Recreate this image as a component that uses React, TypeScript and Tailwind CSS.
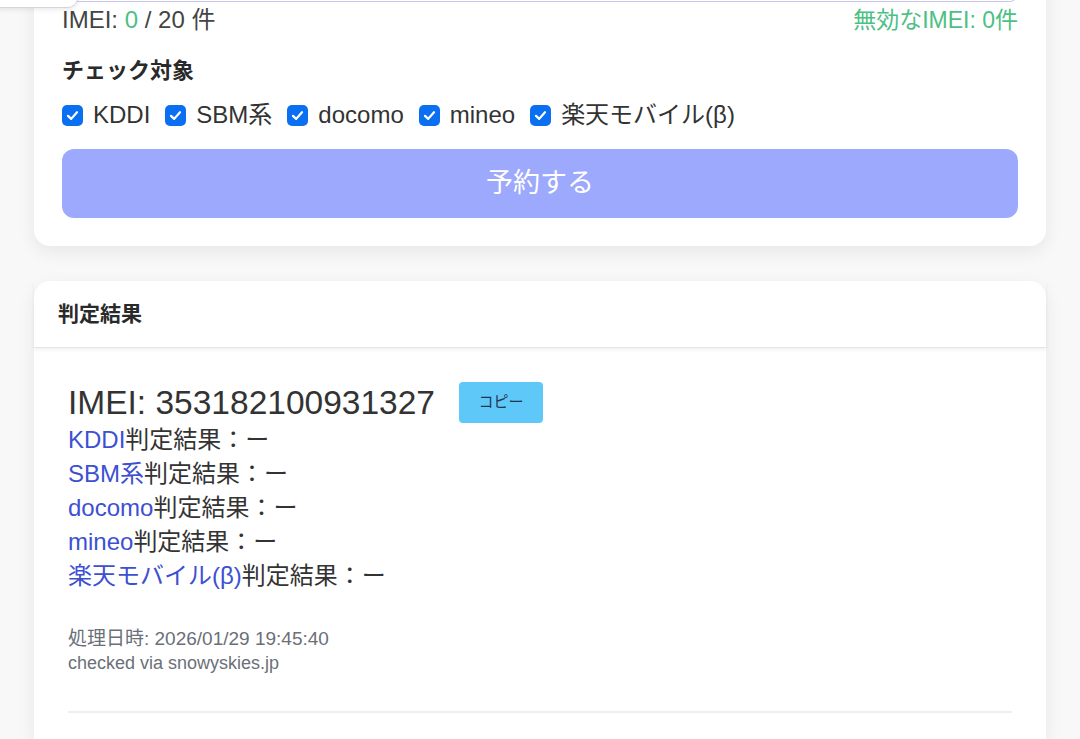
import React from 'react';

const carriers = ['KDDI', 'SBM系', 'docomo', 'mineo', '楽天モバイル(β)'];

const font = { fontFamily: '"Liberation Sans", "Noto Sans CJK JP", sans-serif' };

function CheckBox() {
  return (
    <span className="inline-flex items-center justify-center w-[21px] h-[21px] rounded-[5px] bg-[#0a6ff0]">
      <svg viewBox="0 0 16 16" className="w-[15px] h-[15px]" fill="none">
        <path d="M3.2 8.4 L6.6 11.6 L12.8 4.6" stroke="white" strokeWidth="2.4" strokeLinecap="round" strokeLinejoin="round" />
      </svg>
    </span>
  );
}

export default function App() {
  return (
    <div className="relative min-h-screen bg-[#f8f8f9] overflow-hidden text-[#333]" style={font}>
      {/* floating element cut off at top-left */}
      <div className="absolute top-[-20px] left-[-10px] w-[88px] h-[28px] rounded-b-[10px] bg-white border border-[#d6d6da] shadow-[0_2px_4px_rgba(0,0,0,0.08)] z-10" />

      <div className="px-[34px]">
        {/* entry card */}
        <div className="mt-[-150px] bg-white rounded-[16px] shadow-[0_6px_18px_rgba(0,0,0,0.07)] px-[28px] pt-[28px] pb-[28px]">
          <div className="h-[124px] rounded-[8px] border border-[#c9c6ea]" />
          <div className="mt-[6px] h-[24px] flex items-center justify-between text-[24px] leading-[24px]">
            <div className="text-[#444]">
              IMEI: <span className="text-[#4cc083]">0</span> / 20 件
            </div>
            <div className="text-[#4cc083] text-[23px]">無効なIMEI: 0件</div>
          </div>
          <div className="mt-[24px] h-[28px] flex items-center text-[22px] font-semibold text-[#2a2a2a]">チェック対象</div>
          <div className="mt-[17px] h-[28px] flex items-center gap-[15px] text-[24px] text-[#333]">
            {carriers.map((c) => (
              <label key={c} className="flex items-center gap-[10px]">
                <CheckBox />
                <span>{c}</span>
              </label>
            ))}
          </div>
          <button
            type="button"
            className="mt-[20px] w-full h-[69px] rounded-[12px] bg-[#9da9fc] text-white text-[27px] flex items-center justify-center"
          >
            予約する
          </button>
        </div>

        {/* result card */}
        <div className="mt-[35px] bg-white rounded-t-[16px] shadow-[0_6px_18px_rgba(0,0,0,0.07)] min-h-[460px]">
          <div className="relative h-[67px] px-[24px] flex items-center text-[21px] font-semibold text-[#2a2a2a] border-b border-[#e6e6e6] shadow-[0_2px_4px_rgba(0,0,0,0.06)]">
            判定結果
          </div>
          <div className="px-[34px] pt-[34px]">
            <div className="flex items-center gap-[24px] h-[41px]">
              <div className="text-[33.5px] text-[#333] leading-[41px]">IMEI: 353182100931327</div>
              <button
                type="button"
                className="w-[84px] h-[41px] rounded-[4px] bg-[#5ec9f8] text-[#1f3550] text-[15px] flex items-center justify-center"
              >
                コピー
              </button>
            </div>
            <div className="text-[24px] leading-[34px]">
              {carriers.map((c) => (
                <div key={c}>
                  <span className="text-[#3d50d2]">{c}</span>
                  <span className="text-[#333]">判定結果：ー</span>
                </div>
              ))}
            </div>
            <div className="mt-[33px] leading-[25px] text-[#6b6f78]">
              <div className="text-[19px]">処理日時: 2026/01/29 19:45:40</div>
              <div className="text-[18px]">checked via snowyskies.jp</div>
            </div>
            <div className="mt-[35px] h-[2px] bg-[#eeeeef]" />
          </div>
        </div>
      </div>
    </div>
  );
}
